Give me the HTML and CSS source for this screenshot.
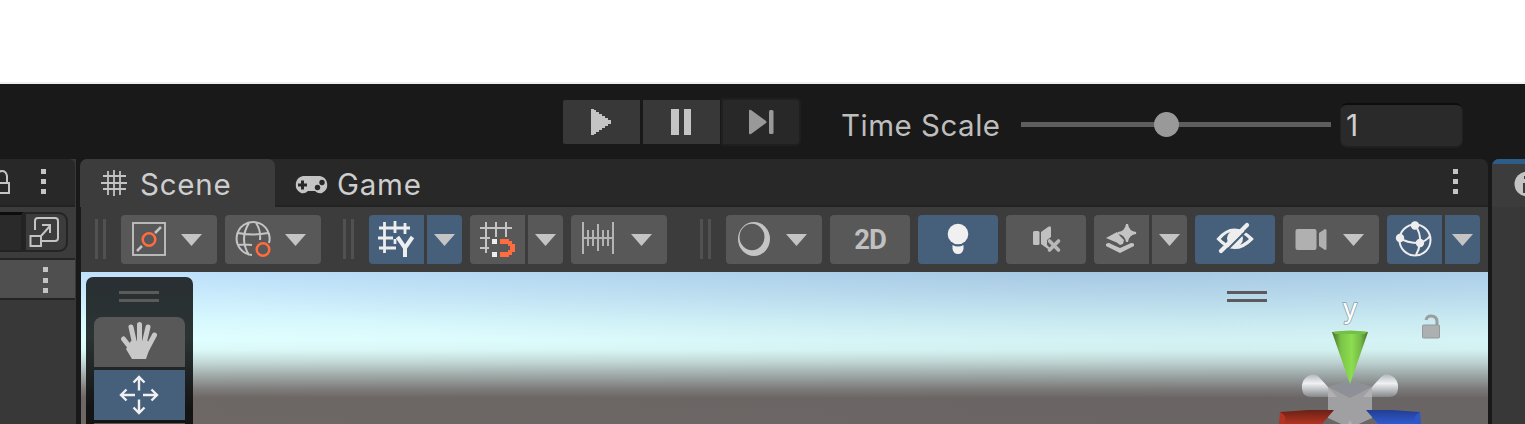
FILE: index.html
```
<!DOCTYPE html>
<html lang="en">
<head>
<meta charset="utf-8">
<title>Scene editor</title>
<link rel="stylesheet" href="styles.css">
</head>
<body>
<div class="blank"></div>
<header class="topbar">
  <div class="transport">
    <button class="play"><svg width="77" height="44"><path fill="#c4c4c4" d="M28 9h3v1h2v2h3v2h3v2h3v2h3v2h3v4h-3v2h-3v2h-3v2h-3v2h-3v2h-2v1h-3z"/></svg></button>
    <button class="play"><svg width="77" height="44" fill="#c4c4c4"><path d="M28 9h8v26h-8zM41 9h7v26h-7z"/></svg></button>
    <button class="play step"><svg width="77" height="44" fill="#999"><path d="M26 11q0-2 2-1l15 11q1 1 0 2L28 34q-2 1-2-1z"/><rect x="46" y="10" width="4.500" height="24" rx="1.500"/></svg></button>
  </div>
  <span class="label time">Time Scale</span>
  <div class="slider"><span class="knob"></span></div>
  <div class="field">1</div>
</header>
<main class="panels">
  <section class="left">
    <div class="tabs">
      <svg width="76" height="46"><g fill="none" stroke="#c4c4c4" stroke-width="2"><path d="M-6 24H9v10H-6zM-2 24v-7q0-5 4-5t5 5v7"/></g><path fill="#c4c4c4" d="M41 10h5v5h-5zM41 20h5v5h-5zM41 30h5v5h-5z"/></svg>
    </div>
    <div class="search">
      <div class="search-input"></div>
      <div class="expand"><svg width="41" height="38" fill="none" stroke="#c4c4c4" stroke-width="2"><path d="M9 16V7q0-3 3-3h17q3 0 3 3v17q0 3-3 3H16M15 22l9-10M16 11h8v8"/><rect x="4.500" y="22" width="10.500" height="10"/></svg></div>
    </div>
    <div class="item"><svg width="75" height="38" fill="#c4c4c4"><path d="M43 7h5v5h-5zM43 18h5v5h-5zM43 28h5v5h-5z"/></svg></div>
  </section>
  <section class="center">
    <div class="tabs">
      <div class="tab active"><svg class="grid" width="27" height="26" stroke="#c4c4c4" stroke-width="1.800"><path d="M8 1v24M14 0v26M20 1v24M3 6h23M1 13h26M3 19h23"/></svg><span class="label">Scene</span></div>
      <div class="tab pads"><svg class="pad" width="35" height="18"><path fill="#c4c4c4" d="M9 0h17a9 9 0 0 1 2 17q-4 1-7-2h-7q-3 3-7 2A9 9 0 0 1 9 0z"/><path stroke="#282828" stroke-width="3" d="M4 9h9M8.500 4.500v9"/><g fill="#282828"><circle cx="28" cy="6.500" r="2.700"/><circle cx="23.500" cy="11.500" r="2.700"/></g></svg><span class="label">Game</span></div>
      <svg class="more" width="10" height="26" fill="#c4c4c4"><path d="M2 0h5v5H2zM2 10h5v5H2zM2 20h5v5H2z"/></svg>
    </div>
    <div class="toolbar">
      <i class="grip"></i>
      <button class="tool wide first"><svg width="96" height="49"><g fill="none" stroke="#c4c4c4" stroke-width="1.800"><rect x="12" y="8" width="32" height="32"/><path stroke-width="2.500" d="M16 36l5-5M34 18l6-6"/></g><circle cx="28" cy="24.500" r="6.300" fill="none" stroke="#ff6c3d" stroke-width="2.500"/><path class="tri" d="M60 19h21L70.500 31z"/></svg></button>
      <button class="tool wide"><svg width="96" height="49"><g fill="none" stroke="#c4c4c4" stroke-width="2"><path d="M27 40A16.500 16.500 0 1 1 44 28M13 18q15 3 30 0M12 30q8-1 15 0M24 8q-10 16 0 32M31 8q5 7 4 17"/></g><circle cx="38" cy="34.500" r="6.300" fill="none" stroke="#ff6c3d" stroke-width="2.500"/><path class="tri" d="M60 19h21L70.500 31z"/></svg></button>
      <i class="grip g2"></i>
      <div class="split on"><button class="tool main"><svg width="55" height="49" fill="none" stroke="#eee" stroke-width="2.800"><path d="M10 13h31M9 23h15M10 33h17M15.500 7v31M26 6v12M36 8v11M26 24v5"/><path stroke-width="4" d="M28.500 22l7.500 11 7.500-11M36 31v11"/></svg></button><button class="tool drop"><svg width="35" height="49"><path class="tri" d="M7 19h21L17.500 31z"/></svg></button></div>
      <div class="split"><button class="tool main"><svg width="55" height="49"><path fill="none" stroke="#c4c4c4" stroke-width="2" d="M10 13h32M10 23h10M10 33h9M16 7v31M26 7v15M36 7v15"/><path fill="#eee" d="M22 24h5v5h-5zM22 37h5v5h-5z"/><path fill="#ff6c3d" d="M30 24h9v2h3v3h3v8h-3v3h-3v2h-9v-5h8v-2h2v-4h-2v-2h-8z"/></svg></button><button class="tool drop"><svg width="35" height="49"><path class="tri" d="M7 19h21L17.500 31z"/></svg></button></div>
      <button class="tool wide"><svg width="96" height="49"><path fill="none" stroke="#b4b4b4" stroke-width="2" d="M12 7v32M42 7v32M12 23h30M17 15v16M22 15v16M27 9v27M32 15v16M37 15v16"/><path class="tri" d="M60 19h21L70.500 31z"/></svg></button>
      <i class="grip g3"></i>
      <button class="tool wide"><svg width="96" height="49"><ellipse cx="28" cy="24" rx="16" ry="17" fill="#c4c4c4"/><ellipse cx="26" cy="22" rx="12.500" ry="13.200" fill="#585858"/><path class="tri" d="M60 19h21L70.500 31z"/></svg></button>
      <button class="tool mid two"><span>2D</span></button>
      <button class="tool mid lit"><svg width="80" height="49" fill="#f0f0f0"><circle cx="40" cy="19" r="10.300"/><path d="M34.500 30q5.500 3 11 0v4q-1 5-5.500 5t-5.500-5z"/></svg></button>
      <button class="tool mid"><svg width="80" height="49"><g fill="#c0c0c0"><rect x="27" y="16" width="6.500" height="14" rx="1.500"/><path d="M35 17l7-5q3-2 3 1v9l-4 3v5l3 3-2 1-7-5z"/></g><path stroke="#b8b8b8" stroke-width="3.600" stroke-linecap="round" d="M43.500 26l9 9M52.500 26l-9 9"/></svg></button>
      <div class="split"><button class="tool main"><svg width="55" height="49" fill="#c4c4c4"><path d="M33 9q1 8 9 9-8 1-9 9-1-8-9-9 8-1 9-9z" stroke="#c4c4c4" stroke-width="2"/><path d="M12 23l11-6 3 4 4 4-1 4-3 1q-3-3-7-4zM12 29q3-2 5 0l9 4 9-4q3-2 5 0v2l-14 7-14-7z"/></svg></button><button class="tool drop"><svg width="35" height="49"><path class="tri" d="M7 19h21L17.500 31z"/></svg></button></div>
      <button class="tool mid lit"><svg width="80" height="49"><path fill="none" stroke="#eee" stroke-width="3.200" d="M23.500 24q15-18 33 0-17 17-33 0z"/><circle cx="40" cy="23.500" r="8" fill="#eee"/><path stroke="#46607c" stroke-width="2" d="M29 38L55 12"/><path stroke="#eee" stroke-width="4.300" stroke-linecap="round" d="M26 36L52 10"/></svg></button>
      <button class="tool wide"><svg width="96" height="49"><g fill="#b0b0b0"><rect x="12.500" y="14" width="21" height="21" rx="2"/><path d="M36 18l6-4q1.500 0 1.500 1.500v18q0 1.500-1.500 1.500l-6-4z"/></g><path class="tri" d="M60 19h21L70.500 31z"/></svg></button>
      <div class="split on"><button class="tool main"><svg width="55" height="49"><g fill="none" stroke="#eee" stroke-width="2"><circle cx="28" cy="25" r="15.500"/><path d="M28 10q6 8 5 18-1 7-4 12M13 23q6 5 20 5 6-2 10-7"/></g><g fill="#eee"><circle cx="28" cy="10.500" r="4.200"/><circle cx="13" cy="23" r="4.200"/><circle cx="33" cy="28" r="4.200"/></g></svg></button><button class="tool drop"><svg width="35" height="49"><path class="tri" d="M7 19h21L17.500 31z"/></svg></button></div>
    </div>
    <div class="viewport">
      <div class="tools">
        <i class="handle"></i>
        <button class="vt hand"><svg width="91" height="50"><g stroke="#c8c8c8" fill="none" stroke-linecap="round"><path stroke-width="5" d="M45.500 25V7.500M41 28L37 10M50 27l4-17M53 32l7.500-14M39 34l-9.500-12"/></g><path fill="#c8c8c8" d="M37 24h17l3 4-4 11-1 3H38l-6-10z"/></svg></button>
        <button class="vt move"><svg width="91" height="50" fill="none" stroke="#f0f0f0" stroke-width="2.400"><path d="M45 20.500V7M39.500 12.500L45 7l5.500 5.500M45 29.500V43M39.500 37.500L45 43l5.500-5.500M41 25H27M32.500 19.500L27 25l5.500 5.500M49 25h14M57.500 19.500L63 25l-5.500 5.500"/></svg></button>
        <div class="vt"></div>
      </div>
      <i class="handle float"></i>
      <svg class="gizmo" width="180" height="134" viewBox="1260 290 180 134">
        <defs>
          <linearGradient id="green"><stop stop-color="#466c28"/><stop offset=".25" stop-color="#7bc548"/><stop offset=".55" stop-color="#8cdd50"/><stop offset=".8" stop-color="#74b946"/><stop offset="1" stop-color="#466c28"/></linearGradient>
          <linearGradient id="white" x2="0" y2="1"><stop stop-color="#b4b7ba"/><stop offset=".4" stop-color="#f0f1f5"/><stop offset="1" stop-color="#85878a"/></linearGradient>
          <linearGradient id="red" x2="0" y2="1"><stop stop-color="#6a2017"/><stop offset="1" stop-color="#b33420"/></linearGradient>
          <linearGradient id="blue" x2="0" y2="1"><stop stop-color="#233e91"/><stop offset="1" stop-color="#2f5bd0"/></linearGradient>
        </defs>
        <path fill="#a0a0a2" d="M1328 387l22-6 22 6v31l-22 10-22-10z"/><path fill="#8e9097" d="M1328 387l22-6 22 6-22 11z"/>
        <path fill="url(#white)" d="M1328 387l-9-10q-5-5-11-1-7 4-6 13 1 8 9 8h17zM1372 387l9-10q5-5 11-1 7 4 6 13-1 8-9 8h-17z"/>
        <path fill="#b1b1b3" d="M1328 387l9 10h-9zM1372 387l-9 10h9zM1350 420l2 4h-4z"/>
        <path fill="url(#green)" d="M1332 332q18-2 36 0l-18 52z"/><path fill="#74c044" d="M1333 332q17-3 34 0l-2 2h-30z"/>
        <path fill="url(#red)" d="M1280 412l28-2h26l-12 14h-42z"/><path fill="#b33422" d="M1280 412q7 3 5 12h-6z"/>
        <path fill="url(#blue)" d="M1420 412l-28-2h-26l12 14h42z"/><path fill="#2e57c6" d="M1420 412q-7 3-5 12h6z"/>
        <path fill="none" stroke="#9b9e9e" stroke-width="3" d="M1426 320q1-4 5-4 6 0 6 6v4"/><rect x="1422.500" y="325" width="17" height="13" rx="1" fill="#adb0b0" stroke="#959999"/>
        <text class="axis" x="1350" y="318" text-anchor="middle">y</text>
      </svg>
    </div>
  </section>
  <section class="right"><div class="right-tab"><svg width="33" height="42"><circle cx="35" cy="20" r="12.500" fill="#c4c4c4"/><path fill="#3c3c3c" d="M31 19h4v10h-4zM32 12h3v3h-3z"/></svg></div></section>
</main>
</body>
</html>
```
FILE: styles.css
```
* { box-sizing: border-box; }
body { margin: 0; width: 1525px; height: 424px; overflow: hidden; background: #191919; font-family: Inter, "Liberation Sans", sans-serif; color: #c8c8c8; display: flex; flex-direction: column; }
button { border: 0; padding: 0; margin: 0; color: inherit; font: inherit; display: block; }
svg { display: block; flex: none; }
i { display: block; flex: none; }
.blank { height: 84px; flex: none; background: #fff; border-bottom: 2px solid #f0f0f0; }
.topbar { height: 75px; flex: none; display: flex; align-items: flex-start; padding-left: 563px; }
.transport { display: flex; gap: 3px; padding-top: 16px; }
.play { width: 77px; height: 44px; background: #383838; }
.play:first-child { border-radius: 2px 0 0 2px; }
.step { width: 76px; background: #282828; box-shadow: 0 0 0 2px #1f1f1f; border-radius: 0 3px 3px 0; }
.label { font-size: 29.5px; line-height: 36px; font-weight: 400; letter-spacing: 0.75px; white-space: nowrap; color: #cecece; }
.time { margin: 23px 0 0 42px; width: 180px; color: #bebebe; letter-spacing: 0.5px; }
.slider { width: 310px; height: 25px; margin-top: 28px; display: flex; justify-content: center; align-items: center; padding-right: 19px; background: linear-gradient(#5e5e5e, #5e5e5e) 0 10px / 310px 5px no-repeat; }
.knob { width: 25px; height: 25px; border-radius: 50%; background: #999; }
.field { width: 121px; height: 43px; margin: 19px 0 0 10px; border-radius: 6px; background: #2a2a2a; border-top: 2px solid #0d0d0d; box-shadow: 0 1px 0 1px #202020; padding-left: 5px; font-size: 30px; line-height: 40px; color: #cecece; }
.panels { display: flex; height: 265px; }
.left { width: 76px; background: #383838; margin-right: 4px; }
.left .tabs { border-radius: 0 6px 0 0; width: 75px; }
.tabs { height: 48px; background: #282828; border-bottom: 2px solid #222; }
.search { height: 51px; background: #3c3c3c; display: flex; padding-top: 5px; }
.search-input { width: 23px; height: 40px; background: #2a2a2a; border-top: 3px solid #0d0d0d; border-right: 2px solid #222; border-bottom: 2px solid #222; }
.expand { width: 45px; height: 40px; border: solid #242424; border-width: 2px 2px 2px 3px; border-radius: 0 9px 9px 0; }
.item { width: 75px; height: 42px; border-top: 2px solid #242424; border-bottom: 2px solid #242424; background: #4f4f4f; }
.center { width: 1408px; }
.center .tabs { display: flex; border-radius: 7px 7px 0 0; }
.tab { display: flex; height: 46px; padding-left: 20px; }
.pads { padding-left: 19px; }
.tab .label { margin-top: 7px; }
.tab.active { width: 195px; height: 48px; background: #3c3c3c; border-radius: 7px 7px 0 0; }
.grid { margin: 11px 13px 0 0; }
.pad { margin: 17px 8px 0 0; }
.more { margin: 10px 27px 0 auto; }
.toolbar { height: 65px; margin-left: 1px; background: #3c3c3c; display: flex; gap: 8px; padding: 8px 0 0 14px; }
.grip { width: 11px; height: 40px; margin-top: 4px; border: solid #515151; border-width: 0 3px; }
.first { margin-left: 7px; }
.g2 { margin: 4px 7px 0 14px; }
.g3 { margin: 4px 7px 0 25px; }
.tool { height: 49px; flex: none; background: #585858; border-radius: 4px; }
.wide { width: 96px; }
.mid { width: 80px; }
.split { display: flex; gap: 3px; flex: none; }
.main { width: 55px; border-radius: 4px 0 0 4px; }
.drop { width: 35px; border-radius: 0 4px 4px 0; }
.on .tool, .lit { background: #46607c; }
.tri { fill: #c4c4c4; }
.two { font: 700 27.5px/49px Roboto, sans-serif; color: #c0c0c0; text-align: center; letter-spacing: -1px; }
.viewport { position: relative; height: 152px; margin-left: 1px; overflow: hidden; background: radial-gradient(ellipse 900px 85px at 1000px 0, #40608024, #40608000), linear-gradient(90deg, #20405000, #2040500c 80%), linear-gradient(#bfe0fb 0, #cbedfd 25px, #d9faff 50px, #e0ffff 68px, #dcfaf9 78px, #c5dad8 90px, #a2adab 103px, #7f7d7b 117px, #6d6765 126px, #6e6766 152px); }
.tools { width: 107px; height: 152px; margin: 5px 0 0 5px; padding: 14px 8px 0; border-radius: 7px 7px 0 0; background: linear-gradient(#292f32, #2b3333 60px, #202424 95px, #141414 130px); }
.handle { width: 40px; height: 11px; margin: 0 0 15px 25px; border: solid #5b5b5b; border-width: 3px 0; }
.vt { width: 91px; height: 50px; margin-bottom: 3px; background: #585858; }
.hand { border-radius: 8px 8px 0 0; }
.move { background: #46607c; }
.float { position: absolute; left: 1146px; top: 19px; margin: 0; }
.gizmo { position: absolute; left: 1179px; top: 18px; }
.axis { font: 400 27px Inter, sans-serif; fill: #fff; stroke: #8d9da5; stroke-width: 1.5px; paint-order: stroke; }
.right { width: 33px; margin-left: 4px; background: #383838; border-radius: 7px 0 0; overflow: hidden; }
.right-tab { height: 48px; background: #3c3c3c; border-top: 5px solid #2c5d87; }
```
